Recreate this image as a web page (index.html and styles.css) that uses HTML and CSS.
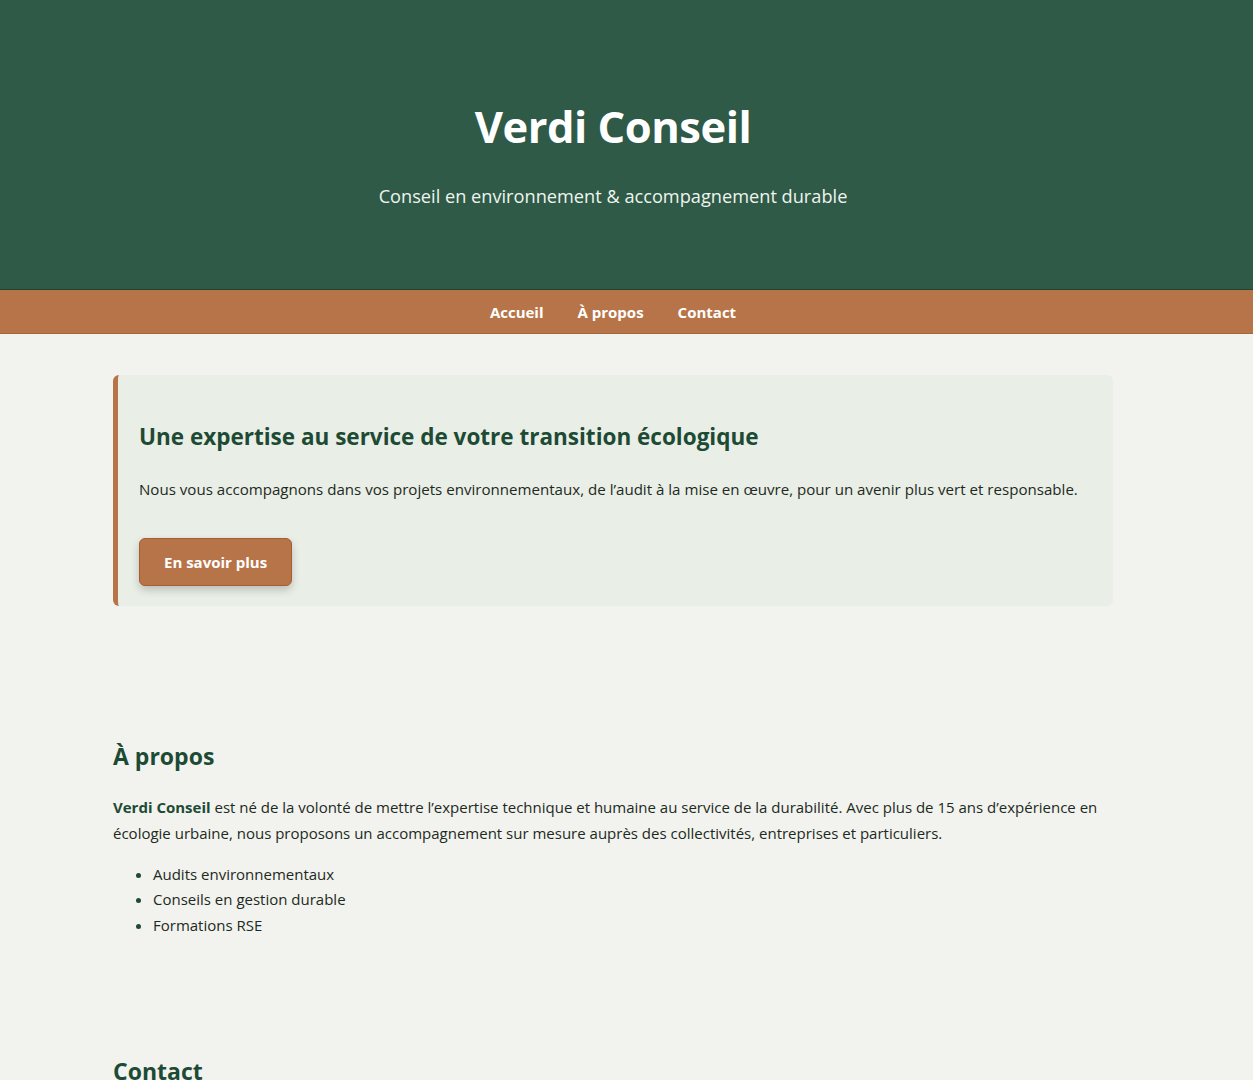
FILE: index.html
```html
<!DOCTYPE html>
<html lang="fr">
<head>
<meta charset="utf-8">
<title>Verdi Conseil</title>
<link rel="stylesheet" href="styles.css">
</head>
<body>
<header class="site-header">
  <div class="frame">
    <h1 class="brand">Verdi Conseil</h1>
    <p class="tagline">Conseil en environnement &amp; accompagnement durable</p>
  </div>
</header>
<nav class="site-nav">
  <div class="frame nav-links">
    <a href="#accueil">Accueil</a>
    <a href="#apropos">À propos</a>
    <a href="#contact">Contact</a>
  </div>
</nav>
<div class="frame">
  <main class="container">
    <section class="hero" id="accueil">
      <h2 class="hero-title">Une expertise au service de votre transition écologique</h2>
      <p class="hero-text">Nous vous accompagnons dans vos projets environnementaux, de l’audit à la mise en œuvre, pour un avenir plus vert et responsable.</p>
      <a class="btn" href="#apropos">En savoir plus</a>
    </section>
    <section class="section" id="apropos">
      <h2 class="section-title">À propos</h2>
      <p class="text"><strong>Verdi Conseil</strong> est né de la volonté de mettre l’expertise technique et humaine au service de la durabilité. Avec plus de 15 ans d’expérience en écologie urbaine, nous proposons un accompagnement sur mesure auprès des collectivités, entreprises et particuliers.</p>
      <ul class="list">
        <li>Audits environnementaux</li>
        <li>Conseils en gestion durable</li>
        <li>Formations RSE</li>
      </ul>
    </section>
    <section class="section section-next" id="contact">
      <h2 class="section-title">Contact</h2>
      <p class="text">Pour toute demande, écrivez-nous à contact@verdi-conseil.fr.</p>
    </section>
  </main>
</div>
</body>
</html>
```
FILE: styles.css
```css
html, body {
  margin: 0;
  padding: 0;
}
body {
  background: #f2f3ee;
  color: #1c2a22;
  font-family: "Open Sans", "Noto Sans", sans-serif;
  font-size: 16px;
  line-height: 1.6;
}
.frame {
  width: 1226px;
}
.site-header {
  background: #2e5a47;
  color: #ffffff;
  border-bottom: 1px solid #1f4434;
}
.site-header .frame {
  text-align: center;
  padding: 101px 0 78px;
}
.brand {
  margin: 0 0 29px;
  font-size: 43.5px;
  font-weight: 700;
  line-height: 1.2;
  letter-spacing: -0.5px;
}
.tagline {
  margin: 0;
  font-size: 18.2px;
  color: #eef4ee;
}
.site-nav {
  background: #b87449;
  border-bottom: 1px solid #a8653c;
}
.nav-links {
  display: flex;
  justify-content: center;
  gap: 34px;
  height: 43px;
  align-items: center;
  padding-top: 1px;
  box-sizing: border-box;
}
.nav-links a {
  color: #ffffff;
  font-weight: 700;
  font-size: 15px;
  text-decoration: none;
}
.container {
  max-width: 1000px;
  margin: 0 auto;
  padding-top: 41px;
}
.hero {
  background: #e9eee6;
  border-left: 5px solid #b87449;
  border-radius: 6px;
  padding: 46px 21px 20px;
}
.hero-title {
  margin: 0 0 24px;
  font-size: 22.5px;
  line-height: 1.4;
  color: #1d4a34;
}
.hero-text {
  margin: 0 0 37px;
  font-size: 15.1px;
}
.btn {
  display: inline-block;
  background: #b87449;
  color: #ffffff;
  font-weight: 700;
  font-size: 15px;
  line-height: 24px;
  text-decoration: none;
  padding: 11px 24px;
  border: 1px solid #a65d30;
  border-radius: 6px;
  box-shadow: 0 4px 8px rgba(0, 0, 0, 0.2);
}
.section {
  padding-top: 136px;
}
.section-next {
  padding-top: 119px;
}
.section-title {
  margin: 0 0 23px;
  font-size: 23px;
  line-height: 1.3;
  color: #1d4a34;
}
.text {
  margin: 0 0 15px;
  font-size: 15px;
  line-height: 1.73;
}
.text strong {
  color: #1d4a34;
}
.list {
  margin: 0;
  padding-left: 40px;
  font-size: 15px;
  line-height: 1.7;
}
.list li::marker {
  color: #1d4a34;
}
```
